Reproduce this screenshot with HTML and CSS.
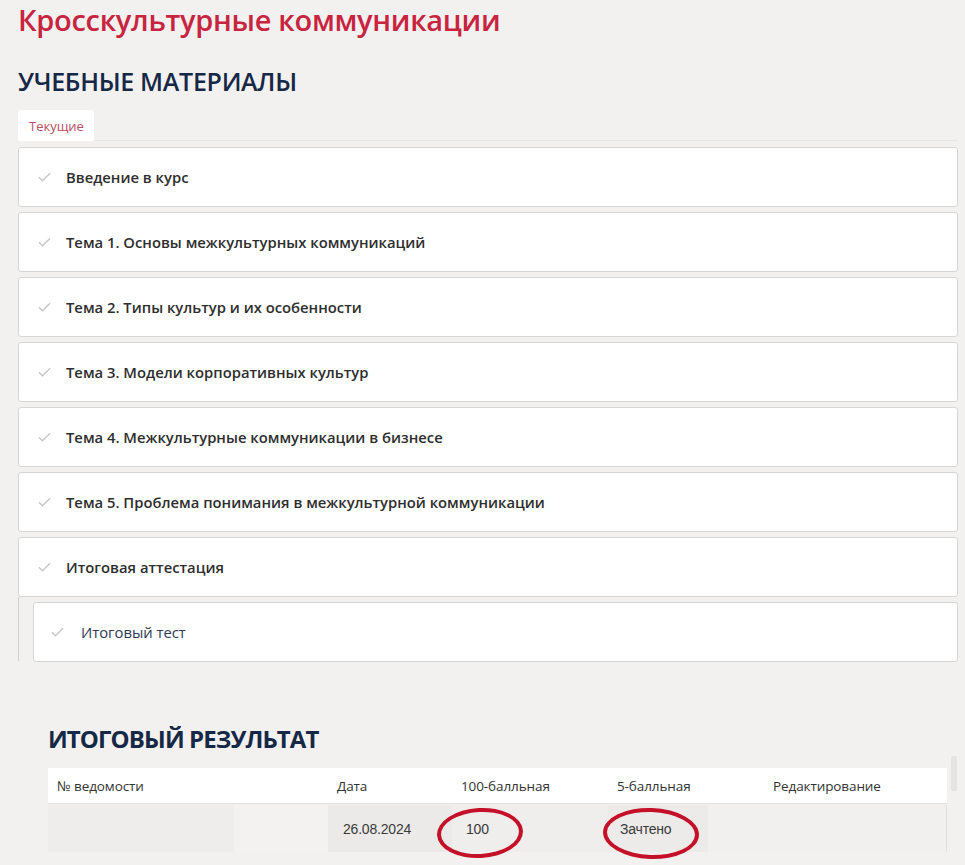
FILE: index.html
```html
<!DOCTYPE html>
<html lang="ru">
<head>
<meta charset="utf-8">
<title>Кросскультурные коммуникации</title>
<link rel="stylesheet" href="styles.css">
</head>
<body>
<main class="page">
  <h1 class="course-title">Кросскультурные коммуникации</h1>
  <h2 class="section-title">УЧЕБНЫЕ МАТЕРИАЛЫ</h2>
  <div class="tabs"><span class="tab">Текущие</span></div>
  <ul class="materials">
    <li class="card"><svg class="check" viewBox="0 0 14 10"><path d="M1 5.2 L4.8 9 L13 1"/></svg><span>Введение в курс</span></li>
    <li class="card"><svg class="check" viewBox="0 0 14 10"><path d="M1 5.2 L4.8 9 L13 1"/></svg><span>Тема 1. Основы межкультурных коммуникаций</span></li>
    <li class="card"><svg class="check" viewBox="0 0 14 10"><path d="M1 5.2 L4.8 9 L13 1"/></svg><span>Тема 2. Типы культур и их особенности</span></li>
    <li class="card"><svg class="check" viewBox="0 0 14 10"><path d="M1 5.2 L4.8 9 L13 1"/></svg><span>Тема 3. Модели корпоративных культур</span></li>
    <li class="card"><svg class="check" viewBox="0 0 14 10"><path d="M1 5.2 L4.8 9 L13 1"/></svg><span>Тема 4. Межкультурные коммуникации в бизнесе</span></li>
    <li class="card"><svg class="check" viewBox="0 0 14 10"><path d="M1 5.2 L4.8 9 L13 1"/></svg><span>Тема 5. Проблема понимания в межкультурной коммуникации</span></li>
    <li class="card card-last"><svg class="check" viewBox="0 0 14 10"><path d="M1 5.2 L4.8 9 L13 1"/></svg><span>Итоговая аттестация</span></li>
    <li class="sub">
      <div class="card sub-card"><svg class="check" viewBox="0 0 14 10"><path d="M1 5.2 L4.8 9 L13 1"/></svg><span>Итоговый тест</span></div>
    </li>
  </ul>

  <section class="result">
    <h2 class="result-title">ИТОГОВЫЙ РЕЗУЛЬТАТ</h2>
    <div class="table-wrap">
      <div class="table">
        <div class="row head">
          <div class="c c1">№ ведомости</div>
          <div class="c c2">Дата</div>
          <div class="c c3">100-балльная</div>
          <div class="c c4">5-балльная</div>
          <div class="c c5">Редактирование</div>
        </div>
        <div class="row data">
          <div class="c c1"></div>
          <div class="c c2">26.08.2024</div>
          <div class="c c3"><span class="mark">100</span></div>
          <div class="c c4"><span class="mark mark-wide">Зачтено</span></div>
          <div class="c c5"></div>
        </div>
      </div>
      <div class="scrollbar"></div>
    </div>
  </section>
</main>
</body>
</html>
```

FILE: styles.css
```css
* { box-sizing: border-box; }
html, body { margin: 0; padding: 0; }
body {
  background: #f2f1ef;
  font-family: "Open Sans", "Noto Sans", sans-serif;
  color: #222;
  width: 965px;
  height: 865px;
  overflow: hidden;
}
.page { padding: 2px 8px 0 18px; }

.course-title {
  margin: 0;
  font-size: 29px;
  line-height: 36px;
  font-weight: 600;
  color: #c8243f;
  letter-spacing: -0.3px;
}
.section-title {
  margin: 28px 0 0;
  font-size: 25px;
  line-height: 30px;
  font-weight: 600;
  color: #152846;
  letter-spacing: -0.3px;
}
.tabs {
  margin-top: 14px;
  height: 31px;
  border-bottom: 1px solid #e6e5e3;
  display: flex;
}
.tab {
  display: flex;
  align-items: center;
  padding: 0 10px 0 11px;
  background: #fff;
  border-radius: 4px 4px 0 0;
  font-size: 13px;
  color: #b84d63;
  height: 31px;
}
.materials {
  list-style: none;
  margin: 6px 0 0;
  padding: 0;
  width: 940px;
}
.card {
  height: 60px;
  background: #fff;
  border: 1px solid #d6d6d6;
  border-radius: 3px;
  display: flex;
  align-items: center;
  padding-left: 19px;
  margin-bottom: 5px;
  font-size: 14.8px;
  font-weight: 600;
  color: #2e2e2e;
}
.card-last { margin-bottom: 0; }
.check {
  width: 13px;
  height: 10px;
  margin-right: 15px;
  fill: none;
  stroke: #c6c6c6;
  stroke-width: 1.5;
  flex: none;
}
.sub {
  border-left: 1px solid #d0d0d0;
  padding: 5px 0 0 14px;
  height: 64px;
}
.sub-card {
  margin: 0;
  padding-left: 17px;
  font-weight: 400;
  color: #2b3a55;
}
.sub-card .check { margin-right: 17px; }

.result { padding-left: 30px; margin-top: 63px; }
.result-title {
  margin: 0;
  font-size: 24px;
  line-height: 30px;
  font-weight: 700;
  color: #152846;
  letter-spacing: -0.9px;
}
.table-wrap {
  display: flex;
  gap: 4px;
  margin-top: 14px;
}
.table { width: 899px; }
.scrollbar {
  width: 7px;
  height: 35px;
  margin-top: -12px;
  background: #e4e4e4;
  border-radius: 2px;
}
.row { display: flex; }
.row.head {
  height: 36px;
  background: #fff;
  border-bottom: 1px solid #e2e1df;
  align-items: center;
}
.row.data {
  height: 47px;
  margin-top: 1px;
  align-items: center;
  font-family: "Liberation Sans", sans-serif;
  color: #333;
}
.c { padding-left: 9px; font-size: 13.5px; color: #333; }
.head .c { letter-spacing: -0.1px; }
.data .c { font-size: 14px; letter-spacing: -0.2px; color: #3a3a3a; }
.c1 { width: 280px; }
.c2 { width: 124px; }
.c3 { width: 156px; }
.c4 { width: 156px; }
.c5 { width: 183px; }
.data .c { height: 100%; display: flex; align-items: center; }
.data .c1 { background: linear-gradient(90deg, #eeedeb 0 186px, #f3f2f0 186px); }
.data .c2 { background: #ebeae8; padding-left: 15px; }
.data .c3 { background: #efeeec; }
.data .c4 { background: linear-gradient(90deg, #ecebe9 0 100px, #f1f0ee 100px); }
.data .c5 { background: #f1f0ee; border-right: 1px solid #e0dfdd; }
.mark { position: relative; padding-left: 5px; }
.mark::after {
  content: "";
  position: absolute;
  left: -24px;
  top: -13px;
  width: 78px;
  height: 42px;
  border: 4px solid #c5102a;
  border-radius: 50%;
  transform: rotate(-3deg);
}
.mark-wide { padding-left: 3px; }
.mark-wide::after {
  left: -14px;
  width: 88px;
  height: 43px;
  transform: rotate(2deg);
}
```
